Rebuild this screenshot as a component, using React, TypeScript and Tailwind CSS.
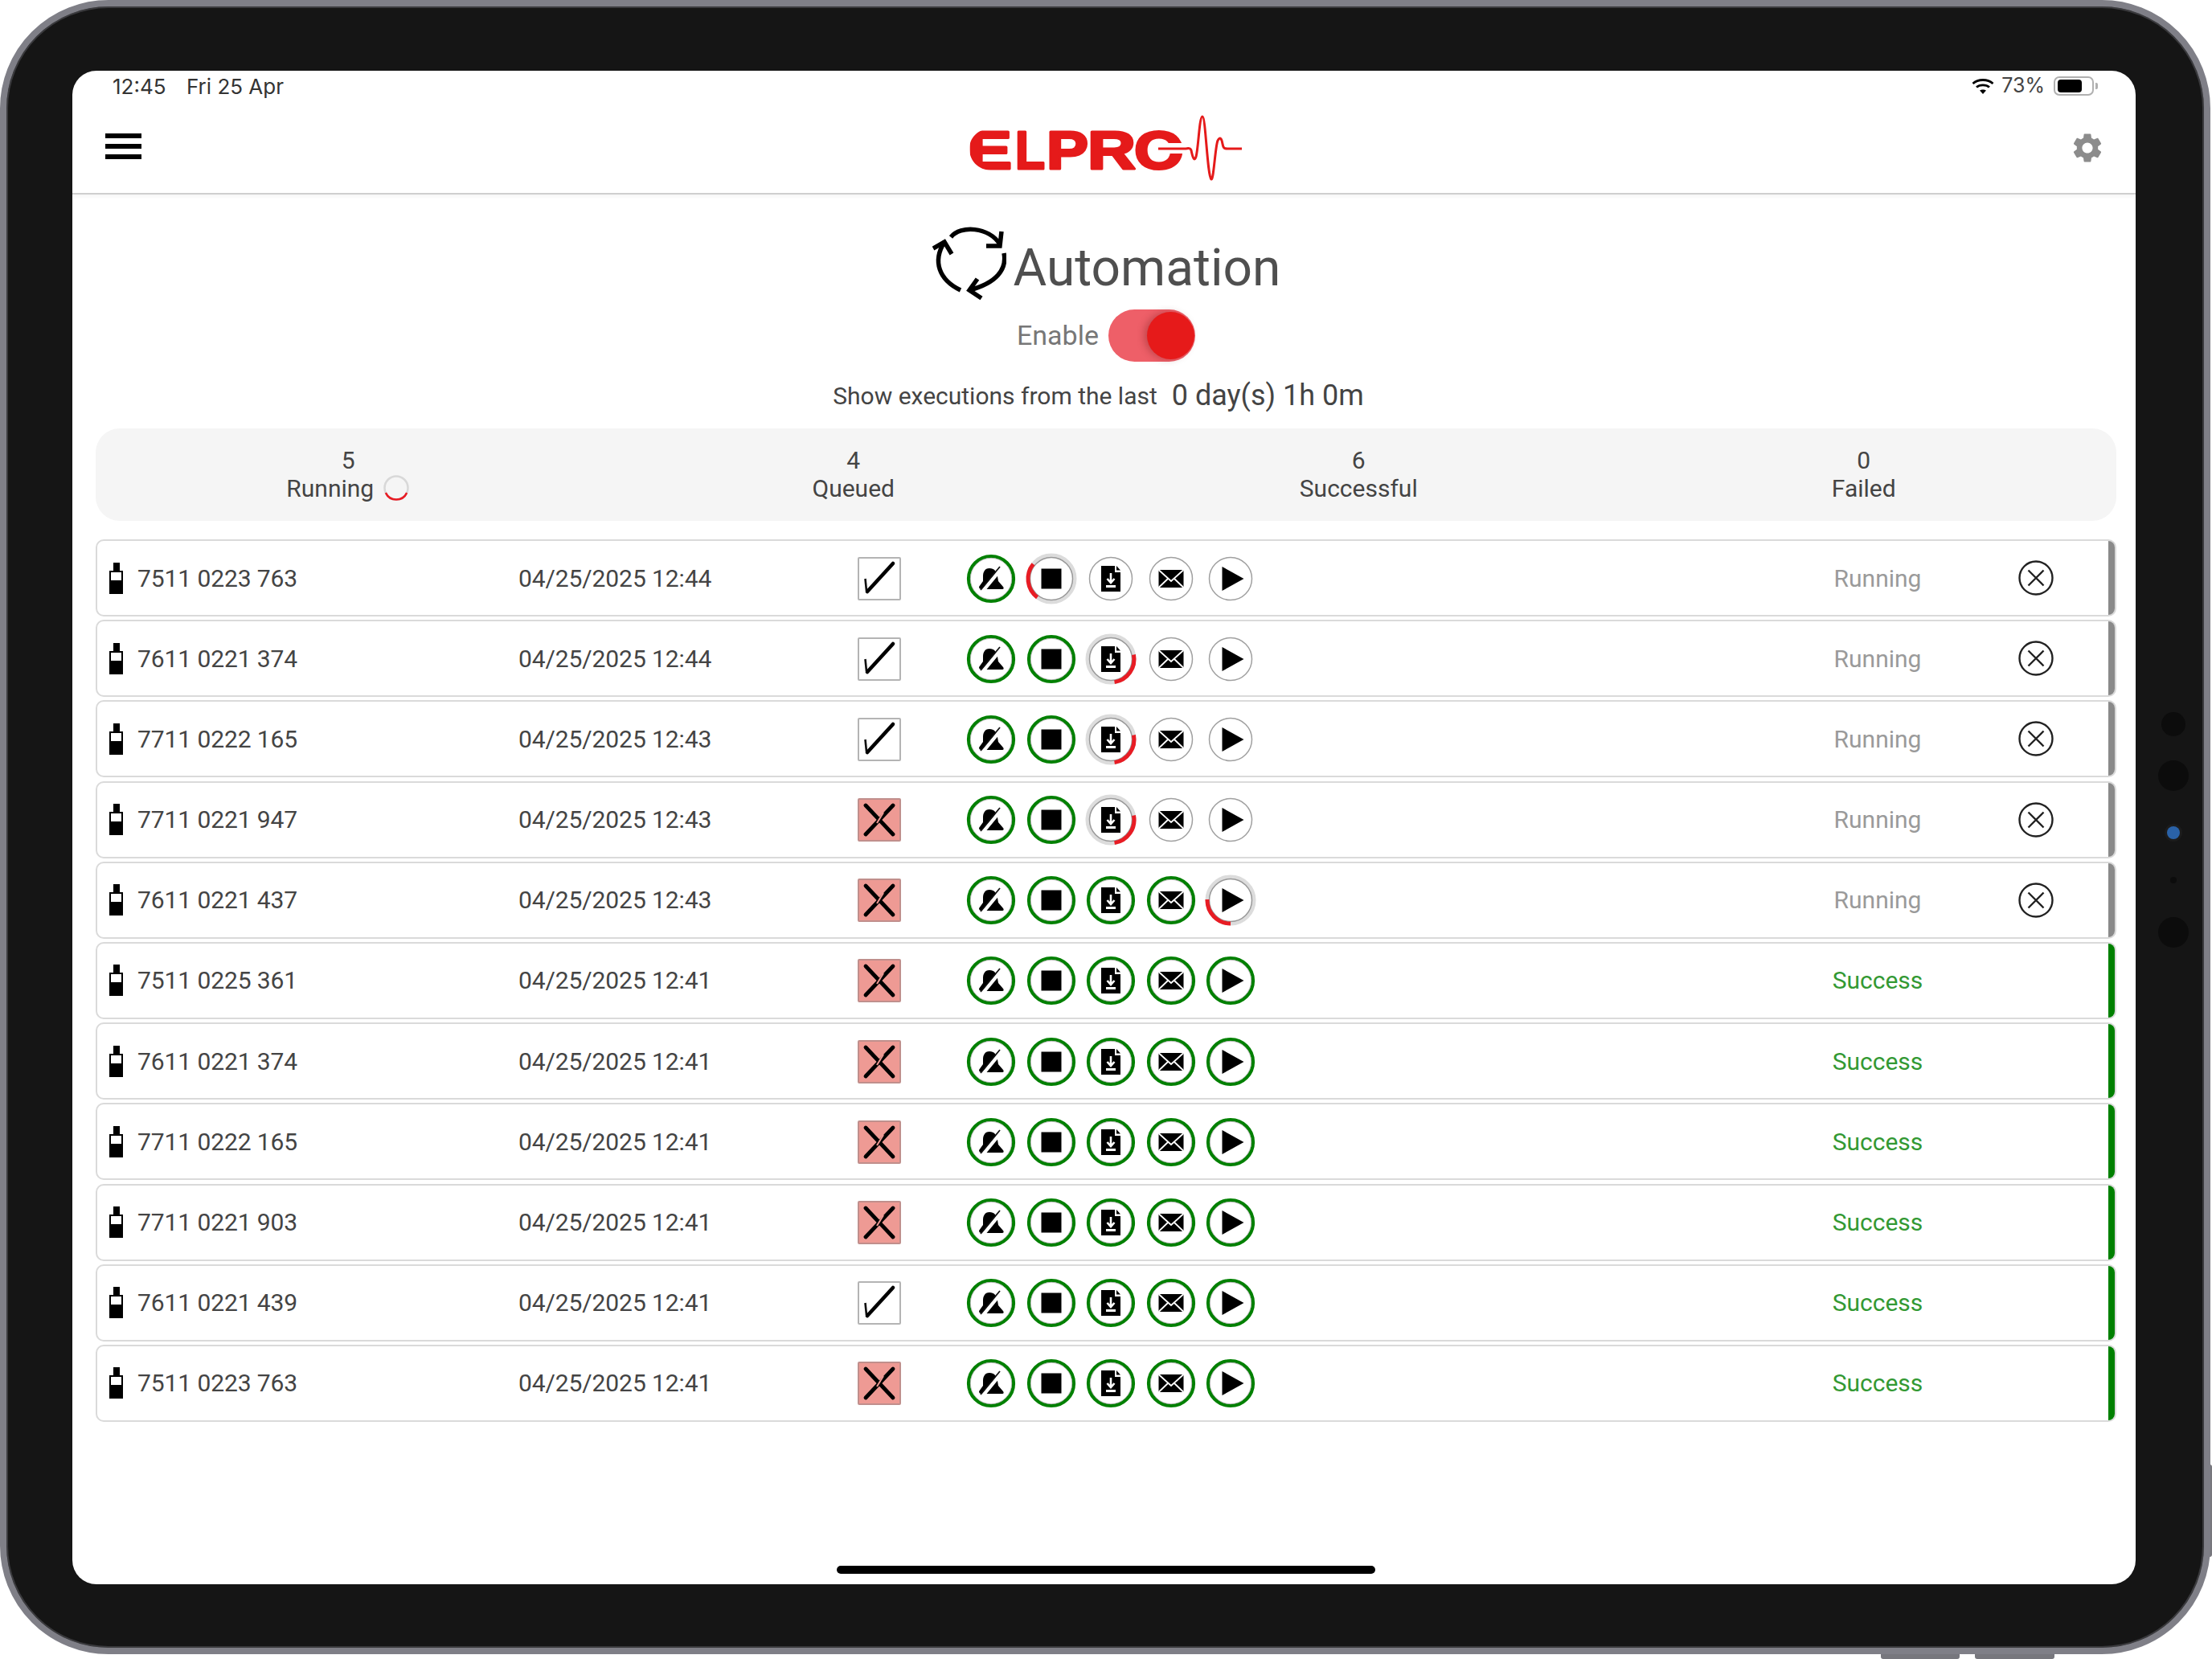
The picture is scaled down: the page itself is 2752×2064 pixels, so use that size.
import { MdSettings } from 'react-icons/md';

type Ring = 'green' | 'plain' | number;

interface Execution {
  serial: string;
  date: string;
  checked: boolean;
  rings: Ring[];
  status: 'Running' | 'Success';
}

const green: Ring[] = ['green', 'green', 'green', 'green', 'green'];

const executions: Execution[] = [
  { serial: '7511 0223 763', date: '04/25/2025 12:44', checked: true, rings: ['green', 127, 'plain', 'plain', 'plain'], status: 'Running' },
  { serial: '7611 0221 374', date: '04/25/2025 12:44', checked: true, rings: ['green', 'green', -11, 'plain', 'plain'], status: 'Running' },
  { serial: '7711 0222 165', date: '04/25/2025 12:43', checked: true, rings: ['green', 'green', -11, 'plain', 'plain'], status: 'Running' },
  { serial: '7711 0221 947', date: '04/25/2025 12:43', checked: false, rings: ['green', 'green', -11, 'plain', 'plain'], status: 'Running' },
  { serial: '7611 0221 437', date: '04/25/2025 12:43', checked: false, rings: ['green', 'green', 'green', 'green', 90], status: 'Running' },
  { serial: '7511 0225 361', date: '04/25/2025 12:41', checked: false, rings: green, status: 'Success' },
  { serial: '7611 0221 374', date: '04/25/2025 12:41', checked: false, rings: green, status: 'Success' },
  { serial: '7711 0222 165', date: '04/25/2025 12:41', checked: false, rings: green, status: 'Success' },
  { serial: '7711 0221 903', date: '04/25/2025 12:41', checked: false, rings: green, status: 'Success' },
  { serial: '7611 0221 439', date: '04/25/2025 12:41', checked: true, rings: green, status: 'Success' },
  { serial: '7511 0223 763', date: '04/25/2025 12:41', checked: false, rings: green, status: 'Success' },
];

// svg arc going clockwise from startDeg over sweepDeg
function arcPath(cx: number, cy: number, r: number, startDeg: number, sweepDeg: number) {
  const a = (startDeg * Math.PI) / 180;
  const b = ((startDeg + sweepDeg) * Math.PI) / 180;
  const large = sweepDeg > 180 ? 1 : 0;
  return `M${cx + r * Math.cos(a)} ${cy + r * Math.sin(a)} A${r} ${r} 0 ${large} 1 ${cx + r * Math.cos(b)} ${cy + r * Math.sin(b)}`;
}

function BellGlyph() {
  return (
    <g>
      <path d="M-2 -13 C-8 -13 -10 -8 -10 -3 L-10 3 L-15 10 C-15 12 -14 13 -12 13 L14 13 C16 13 16 11 15 10 L9 3 L8 -3 C7 -9 4 -13 -2 -13Z" fill="#000" />
      <path d="M-10.9 16 L15.5 -16" stroke="#fff" strokeWidth="4.5" />
      <path d="M-13 14 L11 -15" stroke="#111" strokeWidth="1.8" />
    </g>
  );
}

function StopGlyph() {
  return <rect x="-12.5" y="-12.5" width="25" height="25" fill="#000" />;
}

function DocGlyph() {
  return (
    <g>
      <path d="M-12 -16 L5 -16 L5 -8 L12 -8 L12 16 L-12 16Z" fill="#000" />
      <path d="M7 -16 L12 -10.5 L7 -10.5Z" fill="#000" />
      <path d="M0 -7 L0 4 M-4.5 0 L0 5 L4.5 0" stroke="#fff" strokeWidth="2.6" fill="none" />
      <rect x="-6" y="8" width="12" height="3" fill="#fff" />
    </g>
  );
}

function MailGlyph() {
  return (
    <g>
      <rect x="-15.5" y="-11" width="31" height="22" fill="#000" />
      <path d="M-15.5 -11 L0 3 L15.5 -11 M-15.5 11 L-4 0 M15.5 11 L4 0" stroke="#fff" strokeWidth="1.8" fill="none" />
    </g>
  );
}

function PlayGlyph() {
  return <path d="M-8.5 -15 L18.5 0 L-8.5 15Z" fill="#000" transform="translate(-2 0)" />;
}

const glyphs = [BellGlyph, StopGlyph, DocGlyph, MailGlyph, PlayGlyph];

function RingButton({ ring, index }: { ring: Ring; index: number }) {
  const Glyph = glyphs[index];
  return (
    <svg viewBox="-35 -35 70 70" className="h-[70px] w-[70px] -mx-[5px] shrink-0">
      {ring === 'green' && (
        <>
          <circle r="28" fill="#fff" stroke="#008000" strokeWidth="4.2" />
          <circle r="25.7" fill="none" stroke="#aaa" strokeWidth="0.8" />
        </>
      )}
      {ring === 'plain' && <circle r="26.5" fill="#fff" stroke="#a0a0a0" strokeWidth="1.5" />}
      {typeof ring === 'number' && (
        <>
          <circle r="29" fill="none" stroke="#dcdcdc" strokeWidth="5" />
          <circle r="26.5" fill="#fff" stroke="#989898" strokeWidth="1.5" />
          <path d={arcPath(0, 0, 29, ring, 92)} fill="none" stroke="#e81c24" strokeWidth="5" />
        </>
      )}
      <Glyph />
    </svg>
  );
}

function Bottle() {
  return (
    <div className="flex w-[17px] shrink-0 flex-col items-center">
      <div className="h-[10px] w-[8px] bg-black" />
      <div className="flex h-[29px] w-[17px] flex-col border-2 border-black bg-white">
        <div className="mt-auto h-[15px] bg-black" />
      </div>
    </div>
  );
}

function Flag({ checked }: { checked: boolean }) {
  return (
    <div className={`mt-[1px] h-[54px] w-[54px] shrink-0 rounded-[2px] border-2 ${checked ? 'border-[#b4b4b4] bg-white' : 'border-[#c08f8c] bg-[#ee9a94]'}`}>
      <svg viewBox="0 0 50 50" className="h-full w-full">
        {checked ? (
          <>
            <path d="M7.5 25 L9 40" stroke="#111" strokeWidth="2.6" fill="none" />
            <path d="M10 41 L42 6" stroke="#000" strokeWidth="4.6" strokeLinecap="round" fill="none" />
          </>
        ) : (
          <>
            <path d="M8 7 L42 43" stroke="#000" strokeWidth="4.8" strokeLinecap="round" />
            <path d="M42 7 L8 43" stroke="#000" strokeWidth="4.8" strokeLinecap="round" />
            <path d="M30 16 L22 29" stroke="#ee9a94" strokeWidth="2" />
          </>
        )}
      </svg>
    </div>
  );
}

function CancelIcon() {
  return (
    <svg viewBox="0 0 44 44" className="h-[44px] w-[44px]">
      <circle cx="22" cy="22" r="20.5" fill="none" stroke="#222" strokeWidth="2.4" />
      <path d="M12.5 12.5 L31.5 31.5 M31.5 12.5 L12.5 31.5" stroke="#222" strokeWidth="2.4" />
    </svg>
  );
}

function ExecutionRow({ item }: { item: Execution }) {
  const running = item.status === 'Running';
  return (
    <div className="flex h-[96px] items-stretch overflow-hidden rounded-[10px] border-2 border-[#dadada] bg-white">
      <div className="flex flex-1 items-center pl-[15px]">
        <div className="flex w-[509px] shrink-0 items-center gap-[18px]">
          <Bottle />
          <span className="tracking-[-0.1px]">{item.serial}</span>
        </div>
        <div className="w-[422px] shrink-0 tracking-[-0.1px]">{item.date}</div>
        <div className="w-[136px] shrink-0">
          <Flag checked={item.checked} />
        </div>
        <div className="mt-[1px] flex w-[1043px] shrink-0 gap-[14.6px]">
          {item.rings.map((ring, i) => (
            <RingButton key={i} ring={ring} index={i} />
          ))}
        </div>
        <div className={`w-[180px] shrink-0 text-center ${running ? 'text-[#9a9a9a]' : 'text-[#339933]'}`}>{item.status}</div>
        {running && (
          <div className="ml-[85px]">
            <CancelIcon />
          </div>
        )}
      </div>
      <div className={`w-[8px] shrink-0 ${running ? 'bg-[#8a8a8a]' : 'bg-[#008000]'}`} />
    </div>
  );
}

function ElproLogo() {
  const letter = 'font-[Liberation_Sans,sans-serif] font-bold';
  return (
    <svg viewBox="0 0 345 90" className="mr-[5px] h-[90px] w-[345px]">
      <g fill="#e51a1a" stroke="#e51a1a" strokeWidth="3" strokeLinejoin="round" fontSize="67" className={letter}>
        <text x="2" y="71" textLength="56" lengthAdjust="spacingAndGlyphs">E</text>
        <text x="62" y="71" textLength="37" lengthAdjust="spacingAndGlyphs">L</text>
        <text x="101" y="71" textLength="52" lengthAdjust="spacingAndGlyphs">P</text>
        <text x="152" y="71" textLength="60" lengthAdjust="spacingAndGlyphs">R</text>
        <text x="210" y="71" textLength="62" lengthAdjust="spacingAndGlyphs">O</text>
      </g>
      <path d="M0 16 L32 16 L32 21 C16 21 5 32 5 47 C6 62 16 72 32 73 L32 78 L0 78 Z" fill="#fff" />
      <rect x="250" y="39" width="26" height="13" fill="#fff" />
      <path
        d="M240 46 L273 46 C277 46 279 44 281 48 C283 58 285 62 287 56 C290 46 291 6 295 6 C299 6 301 80 306 84 C309 85 311 42 314 36 C317 30 319 34 320 40 C321 46 323 46 326 46 L344 46"
        fill="none"
        stroke="#e51a1a"
        strokeWidth="3"
      />
    </svg>
  );
}

function AutomationIcon() {
  return (
    <svg viewBox="0 0 92 94" className="h-[94px] w-[92px] shrink-0" fill="none" stroke="#000" strokeWidth="5.5">
      <path d="M23 15 C35 0 70 2 84 24" />
      <path d="M86 8 L84 26 L67 26" />
      <path d="M89 35 C93 55 80 72 46 81" />
      <path d="M56 67 L46 81 L61 91" />
      <path d="M35 81 C8 68 0 45 15 21" />
      <path d="M1 29 L15 21 L24 36" />
    </svg>
  );
}

function WifiIcon() {
  return (
    <svg viewBox="0 0 28 20" className="h-[20px] w-[28px]" fill="none" stroke="#000" strokeWidth="2.8">
      <path d="M1.5 7 C8 1 20 1 26.5 7" />
      <path d="M6 11.5 C10 8 18 8 22 11.5" />
      <path d="M14 20 L10 15.5 C12 14 16 14 18 15.5Z" fill="#000" stroke="none" />
    </svg>
  );
}

function SummaryCell({ count, label, spinner }: { count: number; label: string; spinner?: boolean }) {
  return (
    <div className="mt-[-2px] flex flex-col items-center leading-[35px]">
      <span>{count}</span>
      <span className="flex items-center gap-[11px]">
        {label}
        {spinner && (
          <svg viewBox="0 0 34 34" className="h-[34px] w-[34px]">
            <circle cx="17" cy="17" r="14.5" fill="none" stroke="#d8d8d8" strokeWidth="2.5" />
            <path d={arcPath(17, 17, 14.5, 25, 130)} fill="none" stroke="#e81c24" strokeWidth="2.5" />
          </svg>
        )}
      </span>
    </div>
  );
}

export default function App() {
  return (
    <div className="relative h-[2064px] w-[2752px] overflow-hidden bg-white font-[Roboto,sans-serif] text-[30px] text-[#444]">
      {/* hardware buttons behind the frame */}
      <div className="absolute bottom-0 left-[2340px] h-[20px] w-[98px] rounded-b-[3px] bg-[#77777d]" />
      <div className="absolute bottom-0 left-[2457px] h-[20px] w-[99px] rounded-b-[3px] bg-[#77777d]" />
      <div className="absolute left-[2740px] top-[1822px] h-[115px] w-[12px] rounded-r-[3px] bg-[#77777d]" />

      <div className="relative h-[2058px] w-[2750px] rounded-[135px] border-[8px] border-[#7f7f87] bg-[#151515] pl-[82px] pt-[80px] shadow-[inset_0_0_0_2px_#3a3a3d]">
        <div className="absolute left-[2696px] top-[893px] h-0 w-0">
          <div className="absolute -left-[15px] -top-[15px] h-[30px] w-[30px] rounded-full bg-[#0c0c0c]" />
          <div className="absolute -left-[19px] top-[45px] h-[38px] w-[38px] rounded-full bg-[#0c0c0c]" />
          <div className="absolute -left-[8px] top-[127px] h-[16px] w-[16px] rounded-full bg-[#2a62a8] shadow-[0_0_0_3px_#1c1c1c]" />
          <div className="absolute -left-[4px] top-[190px] h-[8px] w-[8px] rounded-full bg-[#0c0c0c]" />
          <div className="absolute -left-[19px] top-[240px] h-[38px] w-[38px] rounded-full bg-[#0c0c0c]" />
        </div>

        <div className="relative flex h-[1883px] w-[2567px] flex-col overflow-hidden rounded-[30px] bg-white">
          {/* ios status bar */}
          <div className="flex h-[40px] shrink-0 items-center pl-[50px] pr-[47px] font-[Inter,sans-serif] text-[26px] text-[#333]">
            <span className="mt-[-2px] w-[92px]">12:45</span>
            <span className="mt-[-2px]">Fri 25 Apr</span>
            <div className="ml-auto mt-[-2px] flex items-center text-[25px]">
              <WifiIcon />
              <span className="ml-[9px] text-[#444]">73%</span>
              <div className="ml-[11px] flex h-[24px] w-[50px] items-center rounded-[7px] border-2 border-[#b0b0b0] px-[3px]">
                <div className="h-[16px] w-[30px] rounded-[4px] bg-black" />
              </div>
              <div className="ml-[2px] h-[8px] w-[3px] rounded-r-[2px] bg-[#b0b0b0]" />
            </div>
          </div>

          {/* toolbar */}
          <div className="flex h-[114px] shrink-0 items-center justify-between border-b-2 border-[#cfcfcf] pl-[41px] pr-[38px] shadow-[0_3px_4px_rgba(0,0,0,0.04)]">
            <div className="mt-[-4px] flex w-[45px] flex-col gap-[7px]">
              <div className="h-[6px] bg-black" />
              <div className="h-[6px] bg-black" />
              <div className="h-[6px] bg-black" />
            </div>
            <ElproLogo />
            <MdSettings className="h-[44px] w-[44px] text-[#8c8c8c]" />
          </div>

          {/* title */}
          <div className="mt-[38px] flex h-[94px] shrink-0 items-center justify-center gap-[9px] pl-[6px]">
            <AutomationIcon />
            <span className="mt-[14px] text-[64px] leading-none text-[#4f4f4f]">Automation</span>
          </div>

          <div className="mt-[11px] flex h-[65px] shrink-0 items-center justify-center gap-[12px] pl-[5px]">
            <span className="text-[34px] text-[#777]">Enable</span>
            <div className="flex h-[65px] w-[108px] items-center justify-end rounded-full bg-[#ee5f68] pr-[1px]">
              <div className="h-[59px] w-[59px] rounded-full bg-[#e61a1a] shadow-[-4px_0_8px_rgba(120,30,30,0.35)]" />
            </div>
          </div>

          <div className="mt-[22px] flex h-[40px] shrink-0 items-center justify-center gap-[18px] pr-[14px]">
            <span>Show executions from the last</span>
            <span className="text-[36px]">0 day(s) 1h 0m</span>
          </div>

          {/* counters */}
          <div className="ml-[29px] mt-[21px] grid h-[115px] w-[2514px] shrink-0 grid-cols-4 items-center rounded-[30px] bg-[#f5f5f5]">
            <SummaryCell count={5} label="Running" spinner />
            <SummaryCell count={4} label="Queued" />
            <SummaryCell count={6} label="Successful" />
            <SummaryCell count={0} label="Failed" />
          </div>

          {/* executions */}
          <div className="ml-[29px] mt-[23px] flex w-[2514px] flex-col gap-[4.2px]">
            {executions.map((item, i) => (
              <ExecutionRow key={i} item={item} />
            ))}
          </div>

          {/* home indicator */}
          <div className="absolute bottom-[13px] left-[951px] h-[10px] w-[670px] rounded-full bg-black" />
        </div>
      </div>
    </div>
  );
}
